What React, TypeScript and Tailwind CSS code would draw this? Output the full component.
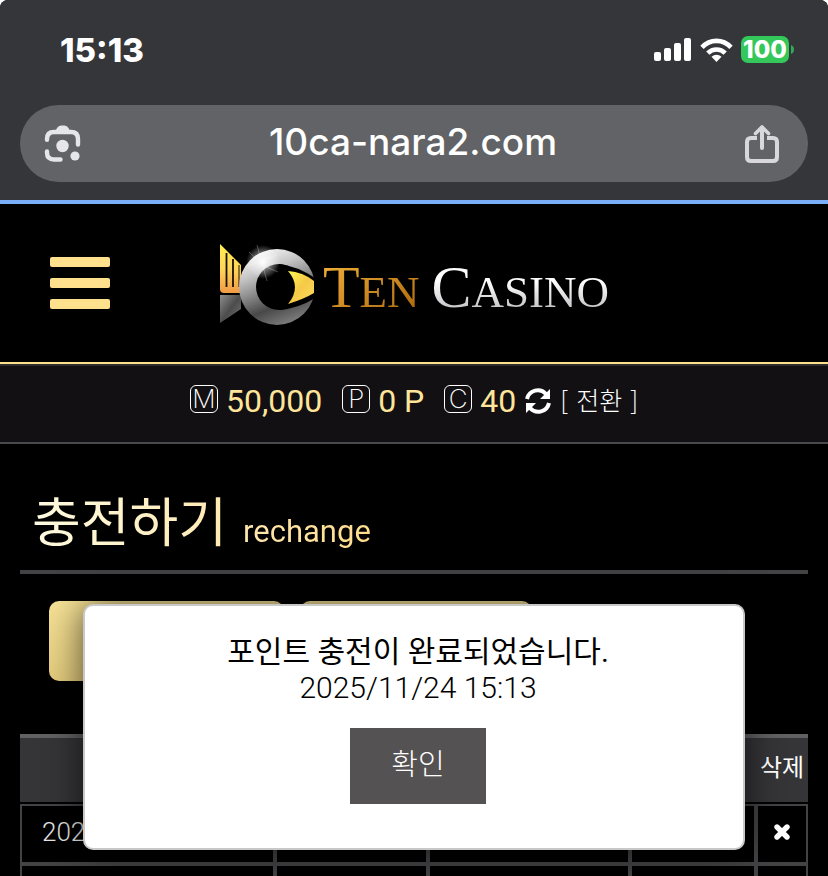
import React from "react";

const korean = "font-['Roboto','Noto_Sans_CJK_KR',sans-serif]";

function StatusIcons() {
  return (
    <div className="flex items-center">
      <svg width="38" height="24" viewBox="0 0 38 24" fill="#fff" aria-hidden="true">
        <rect x="0" y="14" width="7" height="9" rx="2" />
        <rect x="10" y="10" width="7" height="13" rx="2" />
        <rect x="20" y="5" width="7" height="18" rx="2" />
        <rect x="30" y="0" width="7" height="23" rx="2" />
      </svg>
      <svg className="ml-2" width="33" height="24" viewBox="0 0 33 24" fill="none" stroke="#fff" strokeWidth="4.6" aria-hidden="true">
        <path d="M2 9.4C10 .7 23 .7 31 9.4" />
        <path d="M7.8 15.2C12.7 10.3 20.3 10.3 25.2 15.2" />
        <path d="M16.5 24l-5-5.2c2.9-2.8 7.1-2.8 10 0z" fill="#fff" stroke="none" />
      </svg>
      <span className="ml-2 flex h-[27px] w-12 items-center justify-center rounded-[7px] bg-[#34c759] font-[Inter,sans-serif] text-[24px] leading-none font-extrabold">
        100
      </span>
      <svg className="ml-[2px]" width="3" height="9" viewBox="0 0 3 9" aria-hidden="true">
        <path d="M0 0C4 1 4 8 0 9z" fill="#34a85a" />
      </svg>
    </div>
  );
}

function LensIcon() {
  return (
    <svg width="38" height="38" viewBox="0 0 38 38" aria-hidden="true">
      <g fill="none" stroke="#e6e6ea" strokeWidth="4.4" strokeLinecap="round">
        <path d="M3 14.8v-.8q0-7 7-7h17q7 0 7 7v5.500" />
        <path d="M3 26.500v1q0 7 7 7h6.500" />
      </g>
      <path d="M11 7l2-4q1.500-2.500 4-2.500h3.500q2.500 0 4 2.500l2 4z" fill="#e6e6ea" />
      <circle cx="18.500" cy="21" r="6.200" fill="#e6e6ea" />
      <circle cx="31" cy="31" r="4.600" fill="#e6e6ea" />
    </svg>
  );
}

function ShareIcon() {
  return (
    <svg width="36" height="38" viewBox="0 0 36 38" fill="none" stroke="#d8d8dc" strokeWidth="4" aria-hidden="true">
      <path d="M13 13H7q-4 0-4 4v15q0 4 4 4h22q4 0 4-4V17q0-4-4-4h-6" />
      <path d="M18 3v20" strokeLinecap="round" />
      <path d="M11.500 8.500L18 2l6.500 6.500" strokeWidth="3.600" strokeLinecap="round" strokeLinejoin="round" />
    </svg>
  );
}

function Emblem() {
  return (
    <svg width="96" height="90" viewBox="0 0 96 90" aria-hidden="true">
      <defs>
        <linearGradient id="gold" x1="0" y1="0" x2="0" y2="1">
          <stop offset="0" stopColor="#fff04e" />
          <stop offset=".5" stopColor="#ffd65a" />
          <stop offset="1" stopColor="#f09a45" />
        </linearGradient>
        <linearGradient id="steel" x1=".2" y1="0" x2=".6" y2="1">
          <stop offset="0" stopColor="#fff" />
          <stop offset=".3" stopColor="#c4c4c4" />
          <stop offset=".5" stopColor="#8f8f8f" />
          <stop offset=".75" stopColor="#484848" />
          <stop offset="1" stopColor="#7c7c7c" />
        </linearGradient>
        <linearGradient id="base" x1="0" y1="0" x2="1" y2="1">
          <stop offset="0" stopColor="#8d8d8d" />
          <stop offset=".5" stopColor="#4c4c4c" />
          <stop offset="1" stopColor="#777" />
        </linearGradient>
        <linearGradient id="eye" x1="0" y1="0" x2="1" y2="1">
          <stop offset="0" stopColor="#fffb52" />
          <stop offset=".5" stopColor="#f5c947" />
          <stop offset="1" stopColor="#ffdc60" />
        </linearGradient>
        <radialGradient id="flare">
          <stop offset="0" stopColor="#fff" />
          <stop offset=".3" stopColor="#fff" stopOpacity=".6" />
          <stop offset="1" stopColor="#fff" stopOpacity="0" />
        </radialGradient>
      </defs>
      <path d="M1 4L22 25v28H5q-4 0-4-4z" fill="url(#gold)" />
      <path d="M7.500 13v34M14 19v28" stroke="#1c1200" strokeWidth="1.800" />
      <path d="M20 25v22" stroke="#1c1200" strokeWidth="1" />
      <path d="M1 55h21v14L1 83z" fill="url(#base)" />
      <circle cx="58" cy="47" r="38" fill="url(#steel)" />
      <circle cx="60" cy="47" r="23" fill="#000" />
      <path d="M60 24q18 2 36 14v20Q80 68 61 70z" fill="#000" />
      <path d="M69 31q15 1 26 10v12q-10 6-26 11 14-17 0-33z" fill="url(#eye)" />
      <circle cx="44" cy="22" r="17" fill="url(#flare)" />
      <path d="M38 5l10 36M29 26l29-11M40 24l19 8M30 12l16 15" stroke="#fff" strokeOpacity=".4" strokeWidth=".7" />
    </svg>
  );
}

function Balance({ mark, value }: { mark: string; value: string }) {
  return (
    <div className="flex items-center gap-2">
      <span className="mb-1 flex size-7 items-center justify-center rounded-[6px] border border-white font-['Inter',sans-serif] text-[26px] leading-none font-extralight text-white">
        {mark}
      </span>
      <span className="text-[32px] leading-none text-[#ffe59a]">{value}</span>
    </div>
  );
}

const columns = ["w-[32.4%]", "w-[19.4%]", "w-[25.6%]", "w-[16%]", "w-[6.6%]"];

function HistoryTable() {
  return (
    <table className="w-full table-fixed border-separate border-spacing-0 text-white">
      <thead>
        <tr className="h-[68px]">
          {columns.map((width, i) => (
            <th
              key={width}
              className={`${width} border-t-4 border-[#626063] bg-[#353437] p-0 pb-1 text-[24px] font-normal whitespace-nowrap`}
            >
              {i === 4 ? "삭제" : ""}
            </th>
          ))}
        </tr>
        <tr className="h-[2px]" />
      </thead>
      <tbody>
        {[0, 1].map((row) => (
          <tr key={row} className="h-[60px]">
            {columns.map((width, i) => (
              <td key={width} className="overflow-hidden border-2 border-[#434244] p-0">
                {row === 0 && i === 0 && (
                  <span className="block pb-1 pl-5 text-[26px] leading-none font-light text-[#e4e4e4]">2025</span>
                )}
                {row === 0 && i === 4 && (
                  <button type="button" aria-label="삭제" className="mx-auto block pb-1">
                    <svg width="18" height="16" viewBox="0 0 18 16" stroke="#fff" strokeWidth="5.400" strokeLinecap="round" aria-hidden="true">
                      <path d="M4 3l10 10M14 3L4 13" />
                    </svg>
                  </button>
                )}
              </td>
            ))}
          </tr>
        ))}
      </tbody>
    </table>
  );
}

export default function App() {
  return (
    <div className="h-screen overflow-hidden bg-white">
      <div className={`relative min-h-full overflow-hidden rounded-t-[8px] bg-black text-white ${korean}`}>
        <div className="border-b-4 border-[#7aaef8] bg-[#35363a] px-5 pb-[18px]">
          <div className="flex h-[105px] items-start justify-between pt-9 pr-[14px] pl-10">
            <span className="font-[Inter,sans-serif] text-[33px] leading-[28px] font-extrabold">15:13</span>
            <StatusIcons />
          </div>
          <div className="flex h-[77px] items-center justify-between rounded-full bg-[#626366] pr-7 pl-6">
            <button type="button" aria-label="Lens">
              <LensIcon />
            </button>
            <span className="pb-1 font-[Inter,sans-serif] text-[37px] leading-none font-medium">10ca-nara2.com</span>
            <button type="button" aria-label="Share">
              <ShareIcon />
            </button>
          </div>
        </div>

        <header className="relative flex h-40 items-center justify-center border-b-2 border-[#ffe08c]">
          <button type="button" aria-label="Menu" className="absolute top-[53px] left-[50px] flex w-[60px] flex-col gap-[11px]">
            <span className="h-[10px] rounded-[2px] bg-[#ffe08c]" />
            <span className="h-[10px] rounded-[2px] bg-[#ffe08c]" />
            <span className="h-[10px] rounded-[2px] bg-[#ffe08c]" />
          </button>
          <a href="#" aria-label="Ten Casino" className="flex items-center gap-2 pt-1 font-['Liberation_Serif',serif] leading-none whitespace-nowrap">
            <Emblem />
            <span className="flex items-baseline gap-3 pt-1 text-[45px]">
              <span className="bg-linear-to-br from-[#f5b43c] to-[#a86507] bg-clip-text text-transparent">
                <span className="text-[60px]">T</span>EN
              </span>
              <span className="bg-linear-to-b from-white from-40% to-[#b5b5b9] bg-clip-text text-transparent">
                <span className="text-[60px]">C</span>ASINO
              </span>
            </span>
          </a>
        </header>

        <div className="flex h-20 items-center justify-center gap-5 border-t-2 border-b-2 border-t-[#2c2b2e] border-b-[#49484a] bg-[#121013] pb-[6px]">
          <Balance mark="M" value="50,000" />
          <Balance mark="P" value="0 P" />
          <div className="flex items-center">
            <Balance mark="C" value="40" />
            <button type="button" aria-label="Refresh" className="ml-2">
              <svg width="28" height="28" viewBox="0 0 28 28" fill="none" stroke="#fff" strokeWidth="4" aria-hidden="true">
                <path d="M3 12A11 11 0 0 1 22 7M25 16A11 11 0 0 1 6 21" />
                <path d="M26 2v10H16zM2 26V16h10z" fill="#fff" stroke="none" />
              </svg>
            </button>
            <button type="button" className="mb-1 ml-2 flex gap-2 font-['Noto_Sans_CJK_KR',sans-serif] text-[25px] leading-none font-light">
              <span>[</span>
              <span>전환</span>
              <span>]</span>
            </button>
          </div>
        </div>

        <main className="px-5">
          <h1 className="flex h-[130px] items-baseline border-b-4 border-[#434244] pt-[42px] pl-3">
            <span className="bg-linear-to-r from-[#fffbe0] to-[#ffdc8c] bg-clip-text text-transparent">
              <span className="text-[53px] leading-[76px]">충전하기</span>
              <span className="ml-4 text-[31px]">rechange</span>
            </span>
          </h1>
          <div className="mt-[27px] flex gap-4 pl-[29px]">
            <button type="button" aria-label="충전" className="h-20 w-[235px] rounded-[10px] bg-linear-to-b from-[#f6e296] to-[#e3cb7d]" />
            <button type="button" aria-label="내역" className="h-20 w-[232px] rounded-[10px] bg-linear-to-b from-[#f6e296] to-[#e3cb7d]" />
          </div>
          <div className="mt-[53px]">
            <HistoryTable />
          </div>
        </main>

        <div
          role="dialog"
          aria-modal="true"
          className="absolute inset-x-[10%] top-[604px] flex h-[246px] flex-col items-center rounded-[10px] border-2 border-[#c8c8c8] bg-white pt-7 pl-2 text-black shadow-[0_0_36px_rgba(0,0,0,0.65)]"
        >
          <p className="text-[30px] leading-[36px]">포인트 충전이 완료되었습니다.</p>
          <p className="text-[30px] leading-[36px] font-light">2025/11/24 15:13</p>
          <button type="button" className="mt-[22px] h-[76px] w-[136px] bg-[#555253] pb-2 font-['Noto_Sans_CJK_KR',sans-serif] text-[29px] leading-none font-light text-white">
            확인
          </button>
        </div>
      </div>
    </div>
  );
}
